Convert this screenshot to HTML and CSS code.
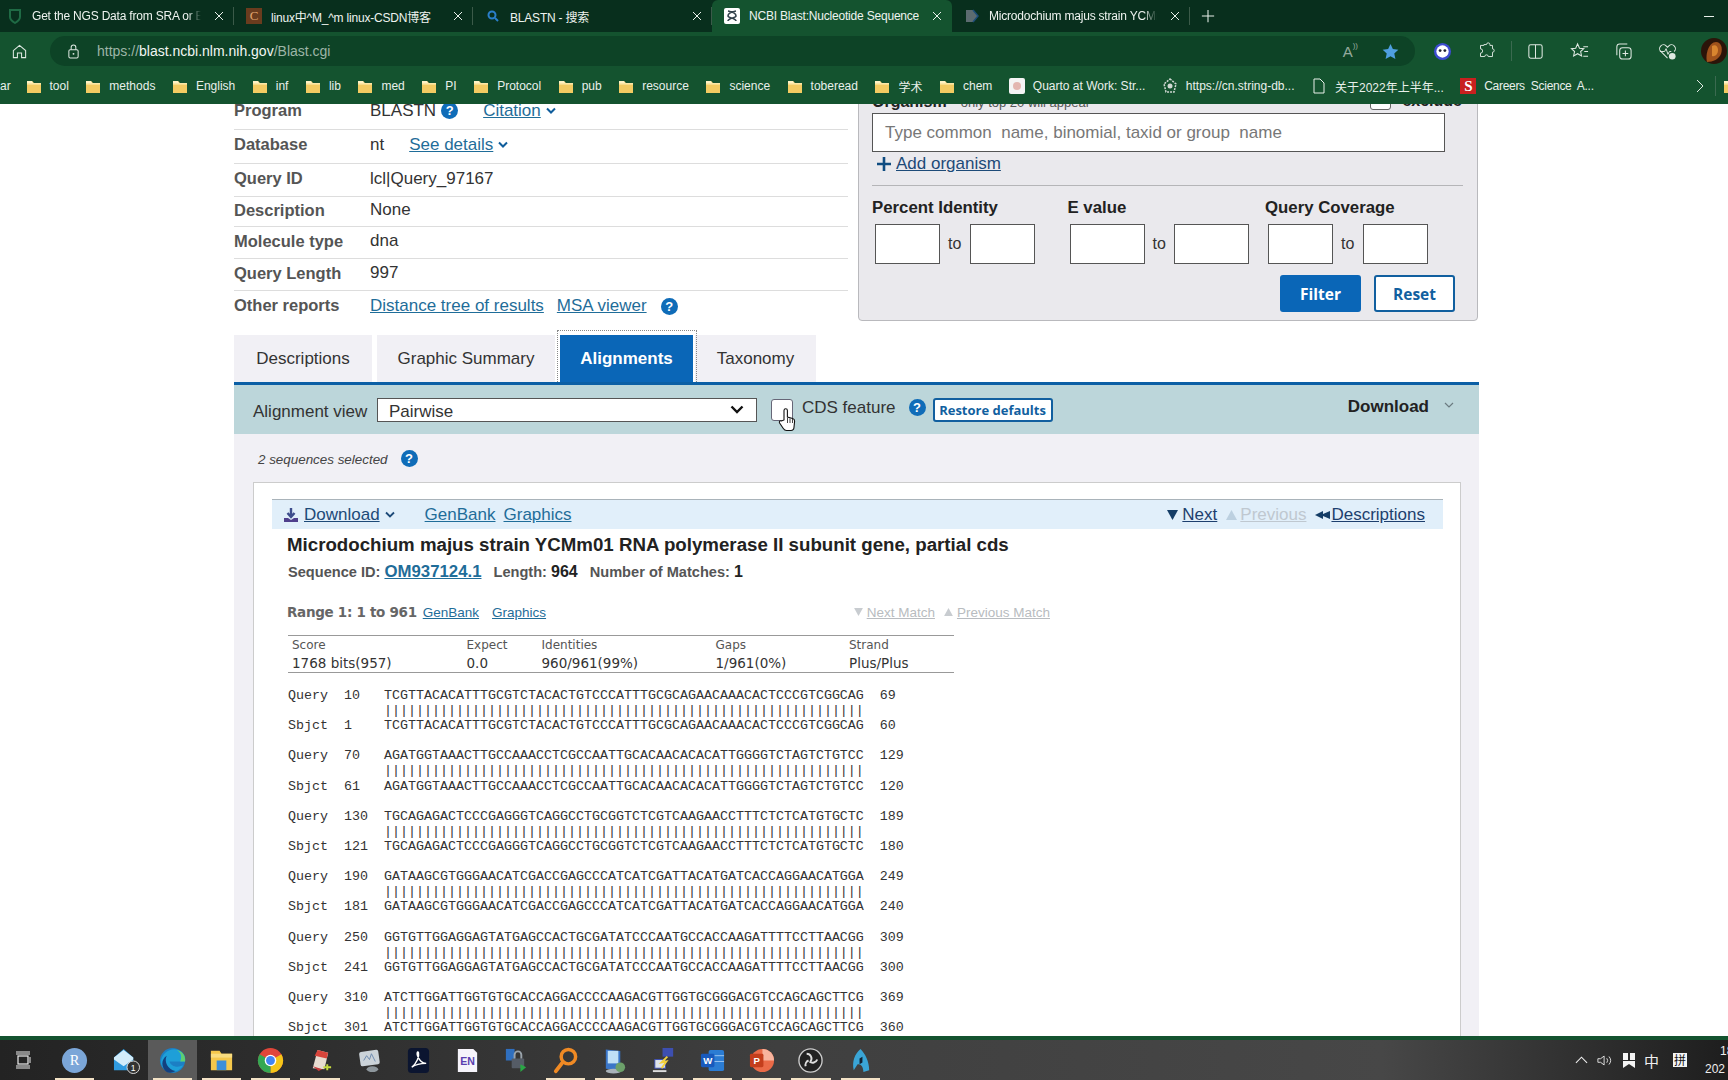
FILE: index.html
```html
<!DOCTYPE html>
<html lang="en">
<head>
<meta charset="utf-8">
<title>NCBI Blast:Nucleotide Sequence</title>
<link rel="stylesheet" href="styles.css">
</head>
<body>
<svg class="defs" width="0" height="0" aria-hidden="true">
  <symbol id="folder" viewBox="0 0 16 16">
    <path d="M1 3h5l2 2h7v10H1z" fill="#f3cb62"/>
    <path d="M1 3h5l1 2H1z" fill="#fff2c4"/>
    <path d="M8 5h7v1.6H1V5z" fill="#fbe7a6"/>
  </symbol>
  <symbol id="x" viewBox="0 0 10 10">
    <path d="M1 1l8 8M9 1l-8 8" stroke="#e8f0ea" stroke-width="1" fill="none"/>
  </symbol>
  <symbol id="tri-down" viewBox="0 0 11 10"><path d="M0 0h11L5.500 10z"/></symbol>
  <symbol id="tri-up" viewBox="0 0 11 10"><path d="M5.500 0L11 10H0z"/></symbol>
  <symbol id="tri-back" viewBox="0 0 15 10"><path d="M0 5l8-4v3l7-3v8l-7-3v3z"/></symbol>
</svg>

<header class="tabstrip">
  <div class="tab tab-first">
    <svg class="favicon" viewBox="0 0 16 16"><path d="M3 2h10v7c0 3-2.500 4.500-5 6-2.500-1.500-5-3-5-6z" fill="none" stroke="#1f6b45" stroke-width="2"/></svg>
    <span class="tab-title">Get the NGS Data from SRA or ENA</span>
    <svg class="tab-x"><use href="#x"/></svg>
  </div>
  <div class="tab">
    <span class="favicon fav-csdn">C</span>
    <span class="tab-title tab-title-full">linux中^M_^m linux-CSDN博客</span>
    <svg class="tab-x"><use href="#x"/></svg>
  </div>
  <div class="tab">
    <svg class="favicon" viewBox="0 0 16 16"><circle cx="7" cy="7" r="3.500" fill="none" stroke="#2a7fc9" stroke-width="2"/><path d="M10 10l3 3" stroke="#2a7fc9" stroke-width="2"/></svg>
    <span class="tab-title tab-title-full">BLASTN - 搜索</span>
    <svg class="tab-x"><use href="#x"/></svg>
  </div>
  <div class="tab tab-active">
    <svg class="favicon" viewBox="0 0 16 16"><rect width="16" height="16" rx="2" fill="#fff"/><path d="M4 3c6 1 8 3 8 5s-8 2-8 5M12 3C6 4 4 6 4 8s8 2 8 5" fill="none" stroke="#33424c" stroke-width="1.600"/></svg>
    <span class="tab-title tab-title-full">NCBI Blast:Nucleotide Sequence</span>
    <svg class="tab-x"><use href="#x"/></svg>
  </div>
  <div class="tab tab-last">
    <svg class="favicon" viewBox="0 0 16 16"><path d="M2 2h7l5 6-5 6H2z" fill="#5c6b70"/><path d="M9 2l5 6-5 6" fill="none" stroke="#1d4e79" stroke-width="1.500"/></svg>
    <span class="tab-title">Microdochium majus strain YCMm01</span>
    <svg class="tab-x"><use href="#x"/></svg>
  </div>
  <svg class="newtab" viewBox="0 0 16 16"><path d="M8 1v14M1 8h14" stroke="#e8f0ea" stroke-width="1.200"/></svg>
  <span class="minimize"></span>
</header>

<nav class="toolbar">
  <svg class="tool-home" viewBox="0 0 18 18"><path d="M2.500 8L9 2.500 15.500 8v7.500h-4.300v-5H6.800v5H2.500z" fill="none" stroke="#dfe9e2" stroke-width="1.100"/></svg>
  <div class="addressbar">
    <svg class="lock" viewBox="0 0 14 16"><rect x="2" y="6" width="10" height="9" rx="1.500" fill="none" stroke="#dfe9e2" stroke-width="1.100"/><path d="M4.500 6V3.500a2.500 2.500 0 015 0V6" fill="none" stroke="#dfe9e2" stroke-width="1.100"/><circle cx="7" cy="10.500" r="1" fill="#dfe9e2"/></svg>
    <span class="url"><span class="url-dim">https://</span>blast.ncbi.nlm.nih.gov<span class="url-dim">/Blast.cgi</span></span>
    <span class="readaloud">A<span class="readaloud-waves">))</span></span>
    <svg class="addr-star" viewBox="0 0 18 18"><path d="M9 1l2.500 5.400 5.800.7-4.300 4 1.200 5.800L9 14l-5.200 2.900L5 11.100l-4.300-4 5.800-.7z" fill="#4f9fe0"/></svg>
  </div>
  <div class="tool-icons">
    <svg class="ti" viewBox="0 0 20 20"><circle cx="10" cy="10" r="9" fill="#3d4bd0"/><circle cx="10" cy="10" r="6.500" fill="#fff"/><circle cx="7.500" cy="9" r="1.500" fill="#223"/><circle cx="12.500" cy="9" r="1.500" fill="#223"/></svg>
    <svg class="ti" viewBox="0 0 20 20"><path d="M7 3h3a2 2 0 014 0v1h3v4a2 2 0 010 4v5h-5a2 2 0 00-4 0H3v-4a2 2 0 000-5V4h4z" fill="none" stroke="#dfe9e2" stroke-width="1.100" transform="translate(1 0) scale(.9)"/></svg>
    <span class="tool-sep"></span>
    <svg class="ti" viewBox="0 0 20 20"><rect x="3" y="3" width="14" height="14" rx="2" fill="none" stroke="#dfe9e2" stroke-width="1.100"/><path d="M10 3v14" stroke="#dfe9e2" stroke-width="1.100"/></svg>
    <svg class="ti" viewBox="0 0 20 20"><path d="M8 2l2 4.500 4.500.5-3.300 3 1 4.600L8 12.300 3.800 14.600l1-4.600L1.500 7l4.500-.5z" fill="none" stroke="#dfe9e2" stroke-width="1.100"/><path d="M14 5h5M15 10h4M14 15h5" stroke="#dfe9e2" stroke-width="1.100"/></svg>
    <svg class="ti" viewBox="0 0 20 20"><rect x="6" y="6" width="12" height="12" rx="3" fill="none" stroke="#dfe9e2" stroke-width="1.100"/><path d="M3 14V5a3 3 0 013-3h8M12 9v6M9 12h6" fill="none" stroke="#dfe9e2" stroke-width="1.100"/></svg>
    <svg class="ti" viewBox="0 0 20 20"><path d="M10 17L3 10a4 4 0 015.500-6L10 5.500 11.500 4A4 4 0 0117 10" fill="none" stroke="#dfe9e2" stroke-width="1.100"/><path d="M2 10h5l1.500-3 2 6 1.500-3h2" fill="none" stroke="#dfe9e2" stroke-width="1"/><circle cx="15" cy="15" r="3.500" fill="#dfe9e2"/></svg>
    <svg class="avatar" viewBox="0 0 26 26"><circle cx="13" cy="13" r="13" fill="#2b1409"/><path d="M6 24c-2-8 2-20 9-20 5 0 7 6 5 12-2 5-8 8-14 8z" fill="#a0521c"/><path d="M11 8c3-2 6 0 6 4s-3 7-6 6z" fill="#d9852f"/></svg>
  </div>
</nav>

<nav class="bookmarks">
  <span class="bm bm-cut">ar</span>
  <span class="bm"><svg class="bm-icon"><use href="#folder"/></svg>tool</span>
  <span class="bm"><svg class="bm-icon"><use href="#folder"/></svg>methods</span>
  <span class="bm"><svg class="bm-icon"><use href="#folder"/></svg>English</span>
  <span class="bm"><svg class="bm-icon"><use href="#folder"/></svg>inf</span>
  <span class="bm"><svg class="bm-icon"><use href="#folder"/></svg>lib</span>
  <span class="bm"><svg class="bm-icon"><use href="#folder"/></svg>med</span>
  <span class="bm"><svg class="bm-icon"><use href="#folder"/></svg>PI</span>
  <span class="bm"><svg class="bm-icon"><use href="#folder"/></svg>Protocol</span>
  <span class="bm"><svg class="bm-icon"><use href="#folder"/></svg>pub</span>
  <span class="bm"><svg class="bm-icon"><use href="#folder"/></svg>resource</span>
  <span class="bm"><svg class="bm-icon"><use href="#folder"/></svg>science</span>
  <span class="bm"><svg class="bm-icon"><use href="#folder"/></svg>toberead</span>
  <span class="bm"><svg class="bm-icon"><use href="#folder"/></svg>学术</span>
  <span class="bm"><svg class="bm-icon"><use href="#folder"/></svg>chem</span>
  <span class="bm"><svg class="bm-icon" viewBox="0 0 16 16"><rect width="16" height="16" rx="2" fill="#f4f4f4"/><circle cx="8" cy="8" r="4" fill="#e3b6b0"/></svg>Quarto at Work: Str...</span>
  <span class="bm"><svg class="bm-icon" viewBox="0 0 16 16"><path d="M8 1l6 5-2 8H4L2 6z" fill="none" stroke="#cfd8d2" stroke-width="1.500" stroke-dasharray="2 1"/><circle cx="8" cy="8" r="2.500" fill="#cfd8d2"/></svg>https://cn.string-db...</span>
  <span class="bm"><svg class="bm-icon" viewBox="0 0 16 16"><path d="M3 1h6l4 4v10H3z" fill="none" stroke="#e8f0ea"/></svg>关于2022年上半年...</span>
  <span class="bm bm-tight"><span class="bm-icon fav-s">S</span>Careers&nbsp; Science&nbsp; A...</span>
  <svg class="bm-more" viewBox="0 0 8 14"><path d="M1 1l6 6-6 6" fill="none" stroke="#dfe9e2"/></svg>
  <span class="bm-sep"></span>
  <svg class="bm-icon bm-tail"><use href="#folder"/></svg>
</nav>

<main class="page">
  <div class="sheet">
    <div class="summary-row">
      <section class="summary">
        <div class="row"><span class="row-label">Program</span><span class="row-val">BLASTN<span class="help help-near">?</span><a class="link link-citation">Citation</a><svg class="chev"><path d="M1 1.500l4 4 4-4" fill="none" stroke="#0f5d9c" stroke-width="2"/></svg></span></div>
        <div class="row"><span class="row-label">Database</span><span class="row-val">nt<a class="link link-details">See details</a><svg class="chev"><path d="M1 1.500l4 4 4-4" fill="none" stroke="#0f5d9c" stroke-width="2"/></svg></span></div>
        <div class="row row-low"><span class="row-label">Query ID</span><span class="row-val">lcl|Query_97167</span></div>
        <div class="row row-low"><span class="row-label">Description</span><span class="row-val">None</span></div>
        <div class="row row-low"><span class="row-label">Molecule type</span><span class="row-val">dna</span></div>
        <div class="row row-low"><span class="row-label">Query Length</span><span class="row-val">997</span></div>
        <div class="row row-last"><span class="row-label">Other reports</span><span class="row-val"><a class="link">Distance tree of results</a><a class="link link-msa">MSA viewer</a><span class="help help-msa">?</span></span></div>
      </section>

      <aside class="filter">
        <div class="org-head"><b class="org-label">Organism</b><span class="org-hint">only top 20 will appear</span><span class="org-check"></span><b class="org-ex">exclude</b></div>
        <div class="org-input">Type common&nbsp; name, binomial, taxid or group&nbsp; name</div>
        <div class="org-add"><svg class="plus" viewBox="0 0 14 14"><path d="M7 0v14M0 7h14" stroke="#0f4c81" stroke-width="2.600"/></svg><a class="link link-dark">Add organism</a></div>
        <div class="ranges">
          <div class="range range-pi"><b class="range-label">Percent Identity</b><div class="range-boxes"><span class="box box-s"></span><span class="to">to</span><span class="box box-s"></span></div></div>
          <div class="range range-ev"><b class="range-label">E value</b><div class="range-boxes range-boxes-ev"><span class="box box-l"></span><span class="to">to</span><span class="box box-l"></span></div></div>
          <div class="range range-qc"><b class="range-label">Query Coverage</b><div class="range-boxes"><span class="box box-s"></span><span class="to">to</span><span class="box box-s"></span></div></div>
        </div>
        <div class="filter-actions"><span class="btn btn-solid">Filter</span><span class="btn btn-line">Reset</span></div>
      </aside>
    </div>

    <div class="tabs">
      <span class="rtab rtab-desc">Descriptions</span>
      <span class="rtab rtab-graph">Graphic Summary</span>
      <span class="rtab rtab-on">Alignments</span>
      <span class="rtab rtab-tax">Taxonomy</span>
    </div>

    <div class="viewbar">
      <span class="view-label">Alignment view</span>
      <span class="select">Pairwise<svg class="select-chev" viewBox="0 0 14 9"><path d="M1.500 1.500L7 7l5.500-5.500" fill="none" stroke="#111" stroke-width="2.400"/></svg></span>
      <span class="cds-box">
        <svg class="hand" viewBox="0 0 18 26"><path d="M6 13V3.500a1.700 1.700 0 013.400 0V10l5.300 1.500c1.300.4 2 1.400 1.900 2.700l-.6 6c-.1 1.600-1.200 3.300-3 3.300H8.500c-1.500 0-2.400-.8-3.200-2L1.600 16c-.8-1.300.5-2.800 2-2z" fill="#fff" stroke="#111" stroke-width="1.100"/><path d="M9.500 11v5M12 11.500V16M14.500 12v4" stroke="#111" stroke-width=".8"/></svg>
      </span>
      <span class="cds-label">CDS feature</span>
      <span class="help help-cds">?</span>
      <span class="restore">Restore defaults</span>
      <span class="view-dl">Download<svg class="view-dl-chev" viewBox="0 0 10 6"><path d="M1 1l4 4 4-4" fill="none" stroke="#6b7b80" stroke-width="1.200"/></svg></span>
    </div>

    <section class="results">
      <div class="selected"><i>2 sequences selected</i><span class="help help-sel">?</span></div>
      <article class="card">
        <div class="card-head">
          <svg class="dl-icon" viewBox="0 0 14 14"><path d="M7 0v8M3.500 5L7 9l3.500-4" fill="none" stroke="#3d4d8c" stroke-width="2.400"/><path d="M0 10h4l3 2 3-2h4v4H0z" fill="#4f3f8c"/></svg>
          <a class="link link-dark">Download</a><svg class="chev chev-dl"><path d="M1 1.500l4 4 4-4" fill="none" stroke="#1d4a78" stroke-width="1.800"/></svg>
          <a class="link link-gb">GenBank</a><a class="link link-gr">Graphics</a>
          <span class="head-nav">
            <svg class="tri tri-dark tri-next"><use href="#tri-down"/></svg><a class="link link-navy">Next</a>
            <svg class="tri tri-pale"><use href="#tri-up"/></svg><a class="link link-pale">Previous</a>
            <svg class="tri tri-dark tri-back"><use href="#tri-back"/></svg><a class="link link-navy">Descriptions</a>
          </span>
        </div>
        <h2 class="title">Microdochium majus strain YCMm01 RNA polymerase II subunit gene, partial cds</h2>
        <p class="seqmeta"><span>Sequence ID:</span> <a class="link seq-link">OM937124.1</a><span class="meta-gap">Length:</span> <b class="meta-val">964</b><span class="meta-gap">Number of Matches:</span> <b class="meta-val">1</b></p>
        <div class="range-line">
          <b class="range-title">Range 1: 1 to 961</b>
          <a class="link range-link">GenBank</a><a class="link range-link range-link2">Graphics</a>
          <span class="match-nav"><svg class="match-tri"><use href="#tri-down"/></svg><a class="link match-pale">Next Match</a><svg class="match-tri match-tri2"><use href="#tri-up"/></svg><a class="link match-pale">Previous Match</a></span>
        </div>
        <div class="stats">
          <span class="st-h">Score</span><span class="st-h">Expect</span><span class="st-h">Identities</span><span class="st-h">Gaps</span><span class="st-h">Strand</span>
          <span class="st-v">1768 bits(957)</span><span class="st-v">0.0</span><span class="st-v">960/961(99%)</span><span class="st-v">1/961(0%)</span><span class="st-v">Plus/Plus</span>
        </div>
<pre class="aln">Query  10   TCGTTACACATTTGCGTCTACACTGTCCCATTTGCGCAGAACAAACACTCCCGTCGGCAG  69
            ||||||||||||||||||||||||||||||||||||||||||||||||||||||||||||
Sbjct  1    TCGTTACACATTTGCGTCTACACTGTCCCATTTGCGCAGAACAAACACTCCCGTCGGCAG  60

Query  70   AGATGGTAAACTTGCCAAACCTCGCCAATTGCACAACACACATTGGGGTCTAGTCTGTCC  129
            ||||||||||||||||||||||||||||||||||||||||||||||||||||||||||||
Sbjct  61   AGATGGTAAACTTGCCAAACCTCGCCAATTGCACAACACACATTGGGGTCTAGTCTGTCC  120

Query  130  TGCAGAGACTCCCGAGGGTCAGGCCTGCGGTCTCGTCAAGAACCTTTCTCTCATGTGCTC  189
            ||||||||||||||||||||||||||||||||||||||||||||||||||||||||||||
Sbjct  121  TGCAGAGACTCCCGAGGGTCAGGCCTGCGGTCTCGTCAAGAACCTTTCTCTCATGTGCTC  180

Query  190  GATAAGCGTGGGAACATCGACCGAGCCCATCATCGATTACATGATCACCAGGAACATGGA  249
            ||||||||||||||||||||||||||||||||||||||||||||||||||||||||||||
Sbjct  181  GATAAGCGTGGGAACATCGACCGAGCCCATCATCGATTACATGATCACCAGGAACATGGA  240

Query  250  GGTGTTGGAGGAGTATGAGCCACTGCGATATCCCAATGCCACCAAGATTTTCCTTAACGG  309
            ||||||||||||||||||||||||||||||||||||||||||||||||||||||||||||
Sbjct  241  GGTGTTGGAGGAGTATGAGCCACTGCGATATCCCAATGCCACCAAGATTTTCCTTAACGG  300

Query  310  ATCTTGGATTGGTGTGCACCAGGACCCCAAGACGTTGGTGCGGGACGTCCAGCAGCTTCG  369
            ||||||||||||||||||||||||||||||||||||||||||||||||||||||||||||
Sbjct  301  ATCTTGGATTGGTGTGCACCAGGACCCCAAGACGTTGGTGCGGGACGTCCAGCAGCTTCG  360</pre>
      </article>
    </section>
  </div>
</main>

<div class="strip"></div>
<footer class="taskbar">
  <svg class="task-view" viewBox="0 0 18 18"><rect x="4" y="5" width="10" height="8" fill="none" stroke="#eee" stroke-width="1.200"/><path d="M2 1h14M2 3h14M2 15h14M2 17h14M16 6v6" stroke="#eee"/></svg>
  <div class="task-apps">
    <span class="app app-run"><svg viewBox="0 0 28 28"><circle cx="14" cy="14" r="13" fill="#7ba6d8"/><text x="14" y="19" class="svg-r">R</text></svg></span>
    <span class="app app-mail"><svg viewBox="0 0 28 28"><path d="M1 11L11 2l10 9v13H1z" fill="#2f9be0"/><path d="M1 13l10 7 10-7v-2L11 3 1 11z" fill="#d2ecfa"/><circle cx="21" cy="21" r="6.500" fill="#333" stroke="#ddd"/><text x="21" y="24.500" class="svg-one">1</text></svg></span>
    <span class="app app-sel app-run"><svg viewBox="0 0 28 28"><circle cx="14" cy="14" r="13" fill="#1c7fc4"/><path d="M2 15C3 6 12 0 20 3c6 2 8 8 7 12H11c1 5 8 7 14 4-3 6-11 9-17 5-4-2-6-5-6-9z" fill="#1e9fd8"/><path d="M8 26c-6-5-6-13 0-17-3 6 1 14 9 16-3 2-6 2-9 1z" fill="#13407f"/><path d="M27 15c1-6-3-11-9-12 5 2 6 7 4 12z" fill="#5ecf70"/></svg></span>
    <span class="app app-run"><svg viewBox="0 0 28 28"><path d="M3 4h9l2 3h11v17H3z" fill="#f5c84c"/><rect x="3" y="7" width="22" height="4" fill="#f9dd80"/><rect x="9" y="14" width="10" height="10" fill="#3c8fd9"/></svg></span>
    <span class="app app-run"><svg viewBox="0 0 28 28"><circle cx="14" cy="14" r="13" fill="#e0463a"/><path d="M14 14L25.300 7.500A13 13 0 0114 27z" fill="#f5c518"/><path d="M14 14L14 27A13 13 0 012.700 7.500z" fill="#34a853"/><circle cx="14" cy="14" r="6" fill="#fff"/><circle cx="14" cy="14" r="4.600" fill="#4285f4"/></svg></span>
    <span class="app app-run"><svg viewBox="0 0 28 28"><path d="M6 22L11 3l11 3-4 17z" fill="#e8dcd0"/><path d="M11 3l11 3-1.500 6L8 9z" fill="#d8453b"/><path d="M6 20l6 5 4-2z" fill="#c73a3a"/><path d="M17 21h8M21 18v6" stroke="#c8dc40" stroke-width="2"/></svg></span>
    <span class="app"><svg viewBox="0 0 28 28"><rect x="4" y="4" width="20" height="15" rx="2" fill="#cbd3d9" transform="rotate(-8 14 12)"/><path d="M8 14l3-5 3 4 2-6 4 8" fill="none" stroke="#6c8ab0"/><ellipse cx="17" cy="23" rx="6" ry="3" fill="#8d969c"/></svg></span>
    <span class="app"><svg viewBox="0 0 28 28"><rect x="3" y="1" width="22" height="26" rx="4" fill="#0b1530"/><path d="M7 21c5-4 8-11 7-15-1-2-2 0-1 3 2 5 5 8 9 8-5 0-11 1-15 4z" fill="none" stroke="#fff" stroke-width="1.500"/></svg></span>
    <span class="app"><svg viewBox="0 0 28 28"><path d="M4 2h16l4 4v20H4z" fill="#f6f4fb"/><text x="14" y="19" class="svg-en">EN</text></svg></span>
    <span class="app"><svg viewBox="0 0 28 28"><rect x="3" y="2" width="9" height="12" fill="#2f6fbf"/><rect x="9" y="12" width="13" height="10" rx="1" fill="#555c66"/><path d="M12 12V8a3.500 3.500 0 017 0v4" fill="none" stroke="#9aa3ab" stroke-width="2"/><path d="M18 18v8l6-5z" fill="#2aa745"/></svg></span>
    <span class="app app-run"><svg viewBox="0 0 28 28"><circle cx="17" cy="10" r="7.500" fill="none" stroke="#f08a24" stroke-width="3.600"/><path d="M11 16L4 25" stroke="#f08a24" stroke-width="4" stroke-linecap="round"/></svg></span>
    <span class="app app-run"><svg viewBox="0 0 28 28"><rect x="5" y="2" width="15" height="20" fill="#3a76c9" transform="skewY(6)"/><rect x="7" y="4" width="11" height="13" fill="#bfe0f7"/><ellipse cx="13" cy="25" rx="8" ry="2.500" fill="#a9b2b9"/><circle cx="20" cy="21" r="5" fill="#6ca06a"/></svg></span>
    <span class="app app-run"><svg viewBox="0 0 28 28"><rect x="13" y="1" width="11" height="9" fill="#3d4fb0"/><rect x="5" y="13" width="11" height="9" fill="#dfe4ea" stroke="#3d4fb0"/><path d="M18 10l-6 6 5-1-5 7" stroke="#f2d03c" stroke-width="2" fill="none"/><rect x="3" y="24" width="14" height="2" fill="#ddd"/></svg></span>
    <span class="app app-run"><svg viewBox="0 0 28 28"><rect x="10" y="3" width="16" height="22" rx="2" fill="#2b7cd3"/><path d="M10 9h16M10 15h16" stroke="#9cc6f0"/><rect x="2" y="7" width="14" height="14" rx="1.500" fill="#185abd"/><text x="9" y="18" class="svg-w">W</text></svg></span>
    <span class="app app-run"><svg viewBox="0 0 28 28"><circle cx="15" cy="14" r="12" fill="#ea6a47"/><path d="M15 2a12 12 0 0112 12H15z" fill="#f8b49e"/><rect x="2" y="7" width="14" height="14" rx="1.500" fill="#c43e1c"/><text x="9" y="18" class="svg-w">P</text></svg></span>
    <span class="app app-run"><svg viewBox="0 0 28 28"><circle cx="14" cy="14" r="12" fill="#222" stroke="#ccc" stroke-width="1.400"/><path d="M10 7a5 5 0 014 8M21 13a5 5 0 01-8 2M9 20a5 5 0 013-6" fill="none" stroke="#ddd" stroke-width="2"/></svg></span>
    <span class="app app-run"><svg viewBox="0 0 28 28"><path d="M14 2c5 5 9 13 9 22l-6 2c0-6-3-9-6-8l-4 6C5 15 8 7 14 2z" fill="#3aa5d6"/><path d="M13 12l3-2v6l-3 2z" fill="#123"/></svg></span>
  </div>
  <div class="tray">
    <svg class="tray-up" viewBox="0 0 14 8"><path d="M1 7l6-6 6 6" fill="none" stroke="#eee" stroke-width="1.200"/></svg>
    <svg class="tray-vol" viewBox="0 0 18 14"><path d="M1 5h3l4-3v10L4 9H1z" fill="none" stroke="#eee"/><path d="M11 4.500a4 4 0 010 5M13.500 2.500a7 7 0 010 9" fill="none" stroke="#eee"/></svg>
    <svg class="tray-rib" viewBox="0 0 12 15"><path d="M0 0h5v7H0zM7 0h5v7H7zM0 8h12v7l-6-4-6 4z" fill="#f4f4f4"/></svg>
    <span class="tray-zh">中</span>
    <span class="tray-pin">拼</span>
    <span class="clock"><span class="clock-time">18</span><span>202</span></span>
  </div>
</footer>
</body>
</html>
```
FILE: styles.css
```css
* { box-sizing: border-box; }
html, body { margin: 0; height: 100%; }
body {
  width: 1728px; height: 1080px; overflow: hidden;
  display: flex; flex-direction: column;
  font-family: "Liberation Sans", "Noto Sans CJK SC", Arial, sans-serif;
  background: #fff; color: #333;
}
.defs { position: absolute; }
a { text-decoration: underline; }
b { font-weight: 700; }

/* browser tabs */
.tabstrip {
  height: 32px; flex: none; display: flex; align-items: stretch;
  background: #082f1d; color: #eef3ef; font-size: 12px; letter-spacing: -.2px; position: relative;
}
.tab { width: 239px; display: flex; align-items: center; padding: 0 10px 0 12px; gap: 9px; position: relative; flex: none; }
.tab::after { content: ""; position: absolute; right: 0; top: 7px; bottom: 7px; width: 1px; background: #3b5a49; }
.tab-first { width: 234px; padding-left: 7px; }
.tab-active { width: 240px; background: #14532f; border-radius: 6px 6px 0 0; }
.tab-active::after { display: none; }
.tab-last { width: 238px; }
.favicon { width: 16px; height: 16px; flex: none; }
.fav-csdn { background: #6a3c1e; color: #e0a56f; display: flex; align-items: center; justify-content: center; font: 13px "Liberation Serif", serif; }
.tab-title {
  flex: 1; min-width: 0; white-space: nowrap; overflow: hidden;
  -webkit-mask-image: linear-gradient(to right, #000 92%, transparent 100%);
  mask-image: linear-gradient(to right, #000 92%, transparent 100%);
}
.tab-title-full { -webkit-mask-image: none; mask-image: none; }
.tab-x { width: 10px; height: 10px; flex: none; margin-left: 4px; }
.newtab { width: 14px; height: 14px; align-self: center; margin-left: 11px; }
.minimize { position: absolute; right: 14px; top: 16px; width: 10px; height: 1px; background: #e8f0ea; }

/* toolbar */
.toolbar {
  height: 36px; flex: none; display: flex; align-items: center;
  background: #14532f; color: #e6eee8; padding: 2px 0 0 11px;
}
.tool-home { width: 17px; height: 17px; flex: none; }
.addressbar {
  width: 1365px; height: 30px; margin-left: 22px; flex: none;
  background: #0d4326; border-radius: 15px;
  display: flex; align-items: center; padding-left: 17px;
}
.lock { width: 13px; height: 15px; flex: none; }
.url { font-size: 14px; margin-left: 17px; color: #f2f6f3; flex: 1; }
.url-dim { color: #9db5a7; }
.readaloud { color: #95a99d; font-size: 15px; display: flex; margin-right: 24px; }
.readaloud-waves { font-size: 8px; margin-top: -2px; }
.addr-star { width: 17px; height: 17px; margin-right: 16px; }
.tool-icons { display: flex; align-items: center; margin-left: 18px; }
.ti { width: 19px; height: 19px; margin-right: 25px; flex: none; }
.tool-sep { width: 1px; height: 20px; background: #3b6a50; margin: 0 14px 0 -10px; }
.avatar { width: 26px; height: 26px; margin-left: -1px; flex: none; }

/* bookmarks */
.bookmarks {
  height: 36px; flex: none; display: flex; align-items: center; gap: 16.5px;
  background: #14532f; color: #e9f0eb; font-size: 12px; white-space: nowrap;
  font-family: "Liberation Sans", "Noto Sans CJK SC", sans-serif;
}
.bm { display: flex; align-items: center; gap: 8px; flex: none; }
.bm-cut { width: 9px; }
.bm-tight { letter-spacing: -.3px; }
.bm-icon { width: 16px; height: 16px; flex: none; }
.fav-s { background: #c8201f; color: #fff; font: bold 15px "Liberation Serif", serif; display: flex; align-items: center; justify-content: center; }
.bm-more { width: 8px; height: 14px; flex: none; margin-left: auto; margin-right: -6px; }
.bm-sep { width: 1px; height: 20px; background: #3b6a50; flex: none; margin-right: -9px; }
.bm-tail { margin-right: -11px; }

/* web page */
.page { flex: 1; min-height: 0; overflow: hidden; background: #fff; }
.sheet { width: 1245px; margin: -14px 0 0 234px; }
.summary-row { display: flex; gap: 10px; align-items: flex-start; }
.summary {
  width: 614px; flex: none; margin-top: 6px;
  display: grid; grid-template-rows: 34px 34px 33px 30px 32px 32px 30px;
}
.row { display: flex; align-items: center; border-bottom: 1px solid #ddd; padding-bottom: 4px; }
.row-low { padding-bottom: 2.500px; }
.row-last { border: 0; padding-bottom: 0; align-items: flex-start; padding-top: 5px; }
.row-label { width: 136px; font-weight: 700; color: #555; flex: none; font-size: 16.5px; }
.row-val { color: #333; display: flex; align-items: center; font-size: 17px; }
.link { color: #1f6d99; }
.link-citation { margin-left: 25px; }
.link-details { margin-left: 25px; }
.link-msa { margin-left: 13px; }
.chev { width: 10px; height: 7px; margin-left: 5px; flex: none; }
.help {
  width: 17px; height: 17px; border-radius: 50%; background: #0f6cb8; color: #fff;
  font: bold 13px/17px "Liberation Sans", sans-serif; text-align: center; display: inline-block; flex: none;
}
.help-near { margin-left: 5px; }
.help-msa { margin-left: 14px; }

/* filter panel */
.filter {
  width: 620px; height: 231px; flex: none; background: #eae9ed;
  border: 1px solid #b9b9bd; border-radius: 4px; padding: 0 13px;
  display: flex; flex-direction: column;
}
.org-head { height: 22px; display: flex; align-items: center; font-size: 16px; }
.org-label { color: #222; }
.org-hint { font-size: 13px; color: #555; margin: 1px 0 0 14px; flex: 1; }
.org-check { width: 21px; height: 20px; background: #fff; border: 1px solid #666; border-radius: 3px; margin: -4px 11px 0 0; }
.org-ex { font-size: 16px; color: #222; margin: -2px 2px 0 0; }
.org-input {
  width: 573px; height: 39px; border: 1px solid #555; background: #fff;
  display: flex; align-items: center; padding-left: 12px; font-size: 17px; color: #777; flex: none;
}
.org-add {
  height: 34px; display: flex; align-items: center; padding: 0 0 9px 5px; gap: 5px;
  font-size: 17px; border-bottom: 1px solid #b5b5b8; flex: none; margin-right: 1px;
}
.plus { width: 14px; height: 14px; flex: none; }
.link-dark { color: #1d4a78; }
.ranges { display: flex; margin-top: 12px; }
.range-label { display: block; font-size: 16.8px; color: #222; height: 26px; }
.range-boxes { display: flex; align-items: center; margin-left: 3px; }
.range-boxes-ev { margin-left: 2px; }
.range-pi { width: 195.5px; }
.range-ev { width: 197.5px; }
.box { height: 40px; background: #fff; border: 1px solid #555; flex: none; }
.box-s { width: 65px; }
.box-l { width: 75px; }
.to { width: 29.500px; text-align: center; font-size: 16px; color: #333; flex: none; }
.filter-actions { display: flex; justify-content: flex-end; gap: 13px; margin: 11px 9px 0 0; }
.btn {
  width: 81px; height: 37px; border-radius: 3px; display: flex; align-items: center; justify-content: center;
  font: 700 15.5px "Open Sans", "Noto Sans", sans-serif;
}
.btn-solid { background: #0a66b7; color: #fff; }
.btn-line { background: #fff; border: 2px solid #115f9f; color: #115f9f; }

/* result tabs */
.tabs { display: flex; height: 47px; margin-top: 14px; font-size: 17px; }
.rtab { background: #f1f0f5; color: #333; display: flex; align-items: center; justify-content: center; flex: none; }
.rtab-desc { width: 138px; margin-right: 5px; }
.rtab-graph { width: 178px; margin-right: 5px; }
.rtab-on { width: 133px; margin-right: 2px; background: #0a66b7; color: #fff; font-weight: 700; position: relative; }
.rtab-on::before { content: ""; position: absolute; inset: -5px -4px 0 -3px; border: 1.500px dotted #888; border-bottom: 0; }
.rtab-tax { width: 121px; }

.viewbar {
  height: 52px; border-top: 3px solid #0b5fa5; background: #bcd6da;
  display: flex; align-items: center; padding-left: 18px; font-size: 17px; color: #333;
}
.view-label { width: 125px; flex: none; padding: 5px 0 0 1px; }
.select {
  width: 380px; height: 24px; background: #fff; border: 1px solid #555; flex: none;
  display: flex; align-items: center; justify-content: space-between; padding: 3px 12px 0 11px; margin-top: 1px;
}
.select-chev { width: 14px; height: 9px; margin-top: -5px; }
.cds-box { width: 22px; height: 22px; background: #fff; border: 1px solid #667; border-radius: 3px; margin-left: 14px; position: relative; flex: none; }
.hand { position: absolute; left: 6px; top: 7px; width: 18px; height: 26px; }
.cds-label { margin-left: 9px; flex: none; margin-top: -3px; }
.help-cds { margin-left: 13px; margin-top: -5px; }
.restore {
  margin-left: 7px; width: 120px; height: 24px; background: #fff; border: 2px solid #115f9f; border-radius: 3px;
  color: #115f9f; font: 700 13px/20px "Open Sans", "Noto Sans", sans-serif; text-align: center; flex: none;
}
.view-dl { margin-left: auto; margin-right: 25px; font-weight: 700; color: #222; display: flex; align-items: center; margin-top: -6px; }
.view-dl-chev { width: 10px; height: 6px; margin: -4px 0 0 15px; }

/* result body */
.results { background: #f1f0f5; padding: 0 18px 0 19px; height: 700px; }
.selected { height: 48px; display: flex; align-items: center; padding: 3px 0 0 5px; font-size: 13.4px; color: #444; }
.help-sel { margin: -3px 0 0 13px; }
.card {
  background: #fff; border: 1px solid #ccc; border-bottom: 0; padding: 16px 17px 0 18px; height: 640px;
}
.card-head {
  height: 30px; background: #e1effa; border-top: 1px solid #a9b3ba; display: flex; align-items: center;
  padding: 0 18px 0 12px; font-size: 17px;
}
.dl-icon { width: 14px; height: 14px; margin-right: 6px; flex: none; }
.chev-dl { margin-left: 5px; }
.link-gb { margin-left: 30px; }
.link-gr { margin-left: 8px; }
.head-nav { margin-left: auto; display: flex; align-items: center; }
.tri { width: 11px; height: 10px; flex: none; }
.tri-dark { fill: #143d66; }
.tri-next { margin-right: 4px; }
.tri-pale { fill: #bcd0e0; margin: 0 3px 0 9px; }
.tri-back { width: 15px; margin: 0 1px 0 9px; }
.link-navy { color: #1d3f6e; }
.link-pale { color: #bfc8d0; }
.title { margin: 5px 0 0 15px; font-size: 18.7px; line-height: 22px; color: #222; font-weight: 700; }
.seqmeta { margin: 6px 0 0 16px; font-size: 14.6px; line-height: 20px; font-weight: 700; color: #555; white-space: nowrap; display: flex; align-items: baseline; gap: 4px; }
.seq-link { font-size: 16.8px; color: #1f6d99; }
.meta-gap { margin-left: 8px; }
.meta-val { color: #222; font-size: 16px; }
.range-line { margin: 20px 0 0 15px; height: 20px; display: flex; align-items: center; font-size: 13px; width: 763px; }
.range-title { font: 700 13.5px "DejaVu Sans", sans-serif; color: #666; letter-spacing: -.3px; }
.range-link { margin-left: 6px; color: #1f6d99; font-size: 13.5px; }
.range-link2 { margin-left: 13px; }
.match-nav { margin-left: auto; display: flex; align-items: center; fill: #c8ccd0; }
.match-tri { width: 9px; height: 8px; margin-right: 4px; flex: none; }
.match-tri2 { margin-left: 9px; }
.match-pale { color: #b8bcc0; font-size: 13.5px; }
.stats {
  margin: 13px 0 0 16px; width: 666px; height: 38px; border-top: 1px solid #999; border-bottom: 1px solid #999;
  display: grid; grid-template-columns: 174.500px 75px 174px 133.500px 1fr; grid-template-rows: 17px 19px;
  padding: 0 0 0 4px; font-family: "DejaVu Sans", sans-serif; align-items: center;
}
.st-h { font-size: 12px; color: #555; }
.st-v { font-size: 13.5px; color: #333; }
.aln {
  margin: 15px 0 0 16px; font: 13.330px/15.100px "Liberation Mono", monospace; color: #333;
}

/* os */
.strip { height: 4px; background: #14532f; flex: none; }
.taskbar {
  height: 40px; flex: none; display: flex; align-items: center; position: relative;
  background: linear-gradient(to right, #232323 0%, #3f3f3f 45%, #474747 80%, #1e1e1e 100%);
  color: #eee; font-family: "Noto Sans CJK SC", "Liberation Sans", sans-serif;
}
.task-view { width: 18px; height: 18px; margin-left: 14px; flex: none; }
.task-apps { display: flex; margin-left: 18px; height: 40px; }
.app { width: 49.100px; height: 40px; display: flex; align-items: center; justify-content: center; flex: none; position: relative; }
.app svg { width: 27px; height: 27px; }
.app-mail svg { margin-left: 6px; }
.app-run::after { content: ""; position: absolute; left: 5px; right: 5px; bottom: 0; height: 2px; background: #f3e2c6; }
.app-sel { background: #5a5a5a; }
.svg-r { font: 15px "Liberation Serif", serif; fill: #fff; text-anchor: middle; }
.svg-one { font: 9px "Liberation Sans", sans-serif; fill: #fff; text-anchor: middle; }
.svg-en { font: bold 11px "Liberation Sans", sans-serif; fill: #5a3fb0; text-anchor: middle; }
.svg-w { font: bold 10px "Liberation Sans", sans-serif; fill: #fff; text-anchor: middle; }
.tray { margin-left: auto; display: flex; align-items: center; height: 40px; }
.tray-up { width: 13px; height: 8px; }
.tray-vol { width: 16px; height: 13px; margin-left: 9px; }
.tray-rib { width: 12px; height: 15px; margin-left: 10px; }
.tray-zh { font-size: 15px; margin-left: 9px; }
.tray-pin { width: 14px; height: 14px; background: #f4f4f4; color: #111; font-size: 12px; line-height: 14px; text-align: center; margin-left: 14px; }
.clock { display: flex; flex-direction: column; align-items: flex-start; width: 23px; font: 12px/18px "Liberation Sans", sans-serif; margin-left: 18px; white-space: nowrap; }
.clock-time { margin-left: 15px; }
```
